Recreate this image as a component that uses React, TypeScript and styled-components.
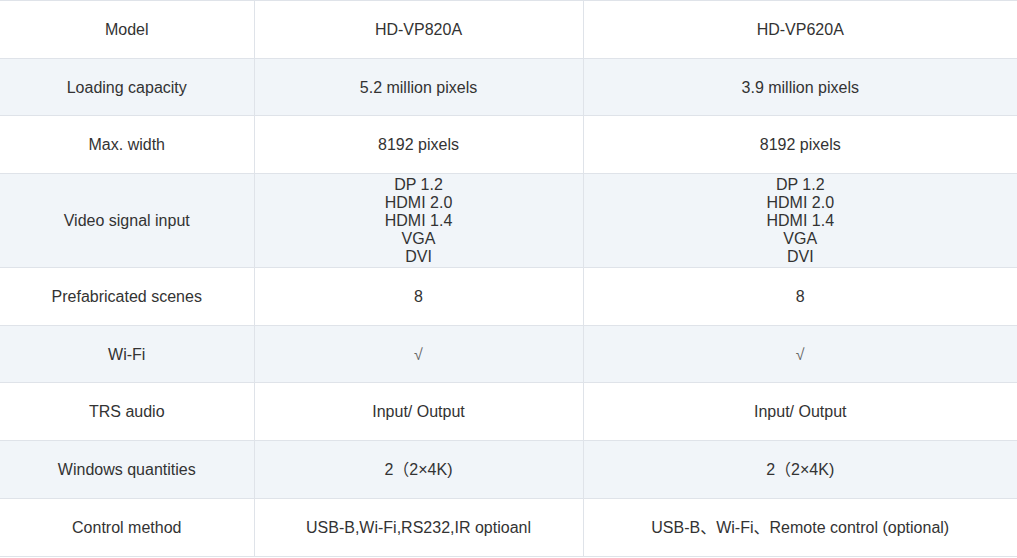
import React from "react";
import styled, { createGlobalStyle } from "styled-components";

type Spec = {
  label: string;
  vp820: string[];
  vp620: string[];
  check?: boolean;
};

const specs: Spec[] = [
  { label: "Model", vp820: ["HD-VP820A"], vp620: ["HD-VP620A"] },
  { label: "Loading capacity", vp820: ["5.2 million pixels"], vp620: ["3.9 million pixels"] },
  { label: "Max. width", vp820: ["8192 pixels"], vp620: ["8192 pixels"] },
  {
    label: "Video signal input",
    vp820: ["DP 1.2", "HDMI 2.0", "HDMI 1.4", "VGA", "DVI"],
    vp620: ["DP 1.2", "HDMI 2.0", "HDMI 1.4", "VGA", "DVI"],
  },
  { label: "Prefabricated scenes", vp820: ["8"], vp620: ["8"] },
  { label: "Wi-Fi", vp820: ["√"], vp620: ["√"], check: true },
  { label: "TRS audio", vp820: ["Input/ Output"], vp620: ["Input/ Output"] },
  { label: "Windows quantities", vp820: ["2（2×4K)"], vp620: ["2（2×4K)"] },
  {
    label: "Control method",
    vp820: ["USB-B,Wi-Fi,RS232,IR optioanl"],
    vp620: ["USB-B、Wi-Fi、Remote control (optional)"],
  },
];

const GlobalStyle = createGlobalStyle`
  html, body {
    margin: 0;
    padding: 0;
    background: #ffffff;
  }
  body {
    font-family: "Liberation Sans", Arial, "Noto Sans CJK SC", sans-serif;
    color: #333333;
  }
`;

const SpecTable = styled.table`
  width: 1017px;
  border-collapse: collapse;
  table-layout: fixed;
  font-size: 16px;
  line-height: 18px;
`;

const Row = styled.tr<{ $striped: boolean }>`
  background: ${(p) => (p.$striped ? "#f1f5f9" : "#ffffff")};
`;

const Cell = styled.td`
  height: 57.7px;
  padding: 2px 4px 1px;
  box-sizing: border-box;
  text-align: center;
  vertical-align: middle;
  border: 1px solid #dfe3e9;
  color: #333333;

  &:first-child {
    border-left: none;
  }
  &:last-child {
    border-right: none;
  }
`;

const Line = styled.div<{ $check?: boolean }>`
  font-size: 16px;
  color: ${(p) => (p.$check ? "#666666" : "#333333")};
`;

export default function App() {
  return (
    <>
      <GlobalStyle />
      <SpecTable>
        <colgroup>
          <col style={{ width: 254 }} />
          <col style={{ width: 329 }} />
          <col style={{ width: 434 }} />
        </colgroup>
        <tbody>
          {specs.map((spec, i) => (
            <Row key={spec.label} $striped={i % 2 === 1}>
              <Cell>{spec.label}</Cell>
              <Cell>
                {spec.vp820.map((line) => (
                  <Line key={line} $check={spec.check}>
                    {line}
                  </Line>
                ))}
              </Cell>
              <Cell>
                {spec.vp620.map((line) => (
                  <Line key={line} $check={spec.check}>
                    {line}
                  </Line>
                ))}
              </Cell>
            </Row>
          ))}
        </tbody>
      </SpecTable>
    </>
  );
}
